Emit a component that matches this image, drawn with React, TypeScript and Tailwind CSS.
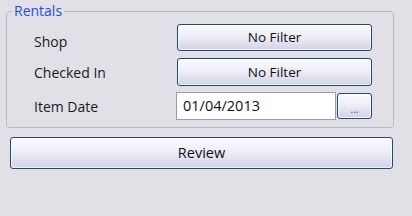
import React from "react";

const btn =
  "flex items-center justify-center border border-[#1f4a7a] rounded-[3px] bg-gradient-to-b from-[#fbfbff] via-[#ececf6] to-[#d2d2e4] text-[#111] shadow-[inset_0_0_0_1px_rgba(255,255,255,0.7)]";

export default function App() {
  return (
    <div
      className="w-[412px] h-[216px] bg-[#e1e0e6] overflow-hidden"
      style={{ fontFamily: '"Open Sans", "Noto Sans", sans-serif' }}
    >
      <div className="pt-[11px] pl-[6px]">
        <div className="relative w-[388px] h-[117px] border border-[#b9b9c0] rounded-[4px]">
          <span className="absolute left-[5px] top-[-10px] px-[2px] bg-[#e1e0e6] text-[#1e4fd8] text-[14px] leading-[18px]">
            Rentals
          </span>
          <div className="pt-[12px] pl-[27px] flex flex-col text-[14px] text-[#1a1a1a]">
            <div className="flex items-center h-[27px]">
              <div className="w-[143px] pt-[8px]">Shop</div>
              <div className={`${btn} w-[195px] h-[27px] text-[13.5px]`}>No Filter</div>
            </div>
            <div className="flex items-center h-[28px] mt-[7px]">
              <div className="w-[143px] pt-[1px]">Checked In</div>
              <div className={`${btn} w-[195px] h-[28px] text-[13.5px]`}>No Filter</div>
            </div>
            <div className="flex items-center h-[28px] mt-[6px]">
              <div className="w-[142px] pt-[1px]">Item Date</div>
              <div className="w-[160px] h-[28px] bg-white border border-[#9c9ca4] flex items-center pl-[6px] text-[14.5px] text-[#111]">
                01/04/2013
              </div>
              <div className={`${btn} ml-[1px] w-[35px] h-[26px] text-[10px] leading-none pt-[6px] text-[#444]`}>
                ...
              </div>
            </div>
          </div>
        </div>
      </div>
      <div className={`${btn} ml-[10px] mt-[9px] w-[383px] h-[32px] text-[14.5px]`}>Review</div>
    </div>
  );
}
